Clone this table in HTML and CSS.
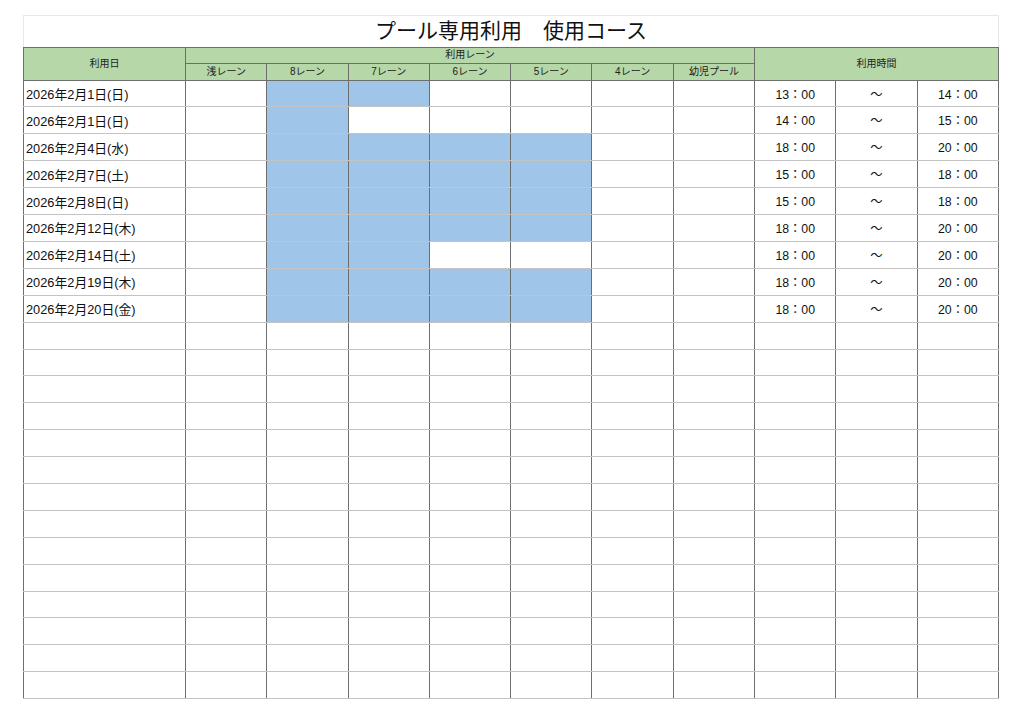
FILE: index.html
```html
<!DOCTYPE html>
<html lang="ja">
<head>
<meta charset="utf-8">
<title>プール専用利用　使用コース</title>
<link rel="stylesheet" href="styles.css">
</head>
<body>
<table class="sheet">
  <colgroup>
    <col class="c-date">
    <col class="c-u"><col class="c-u"><col class="c-u"><col class="c-u"><col class="c-u"><col class="c-u"><col class="c-u">
    <col class="c-u"><col class="c-u"><col class="c-u">
  </colgroup>
  <thead>
    <tr class="title-row"><th colspan="11" class="title">プール専用利用　使用コース</th></tr>
    <tr class="h1">
      <th rowspan="2" class="hd">利用日</th>
      <th colspan="7" class="hd">利用レーン</th>
      <th colspan="3" rowspan="2" class="hd">利用時間</th>
    </tr>
    <tr class="h2">
      <th class="hd">浅レーン</th><th class="hd">8レーン</th><th class="hd">7レーン</th><th class="hd">6レーン</th><th class="hd">5レーン</th><th class="hd">4レーン</th><th class="hd">幼児プール</th>
    </tr>
  </thead>
  <tbody>
    <tr><td class="date">2026年2月1日(日)</td><td></td><td class="b"></td><td class="b"></td><td></td><td></td><td></td><td></td><td class="t">13：00</td><td class="t">～</td><td class="t">14：00</td></tr>
    <tr><td class="date">2026年2月1日(日)</td><td></td><td class="b"></td><td></td><td></td><td></td><td></td><td></td><td class="t">14：00</td><td class="t">～</td><td class="t">15：00</td></tr>
    <tr><td class="date">2026年2月4日(水)</td><td></td><td class="b"></td><td class="b"></td><td class="b"></td><td class="b"></td><td></td><td></td><td class="t">18：00</td><td class="t">～</td><td class="t">20：00</td></tr>
    <tr><td class="date">2026年2月7日(土)</td><td></td><td class="b"></td><td class="b"></td><td class="b"></td><td class="b"></td><td></td><td></td><td class="t">15：00</td><td class="t">～</td><td class="t">18：00</td></tr>
    <tr><td class="date">2026年2月8日(日)</td><td></td><td class="b"></td><td class="b"></td><td class="b"></td><td class="b"></td><td></td><td></td><td class="t">15：00</td><td class="t">～</td><td class="t">18：00</td></tr>
    <tr><td class="date">2026年2月12日(木)</td><td></td><td class="b"></td><td class="b"></td><td class="b"></td><td class="b"></td><td></td><td></td><td class="t">18：00</td><td class="t">～</td><td class="t">20：00</td></tr>
    <tr><td class="date">2026年2月14日(土)</td><td></td><td class="b"></td><td class="b"></td><td></td><td></td><td></td><td></td><td class="t">18：00</td><td class="t">～</td><td class="t">20：00</td></tr>
    <tr><td class="date">2026年2月19日(木)</td><td></td><td class="b"></td><td class="b"></td><td class="b"></td><td class="b"></td><td></td><td></td><td class="t">18：00</td><td class="t">～</td><td class="t">20：00</td></tr>
    <tr><td class="date">2026年2月20日(金)</td><td></td><td class="b"></td><td class="b"></td><td class="b"></td><td class="b"></td><td></td><td></td><td class="t">18：00</td><td class="t">～</td><td class="t">20：00</td></tr>
    <tr><td></td><td></td><td></td><td></td><td></td><td></td><td></td><td></td><td></td><td></td><td></td></tr>
    <tr><td></td><td></td><td></td><td></td><td></td><td></td><td></td><td></td><td></td><td></td><td></td></tr>
    <tr><td></td><td></td><td></td><td></td><td></td><td></td><td></td><td></td><td></td><td></td><td></td></tr>
    <tr><td></td><td></td><td></td><td></td><td></td><td></td><td></td><td></td><td></td><td></td><td></td></tr>
    <tr><td></td><td></td><td></td><td></td><td></td><td></td><td></td><td></td><td></td><td></td><td></td></tr>
    <tr><td></td><td></td><td></td><td></td><td></td><td></td><td></td><td></td><td></td><td></td><td></td></tr>
    <tr><td></td><td></td><td></td><td></td><td></td><td></td><td></td><td></td><td></td><td></td><td></td></tr>
    <tr><td></td><td></td><td></td><td></td><td></td><td></td><td></td><td></td><td></td><td></td><td></td></tr>
    <tr><td></td><td></td><td></td><td></td><td></td><td></td><td></td><td></td><td></td><td></td><td></td></tr>
    <tr><td></td><td></td><td></td><td></td><td></td><td></td><td></td><td></td><td></td><td></td><td></td></tr>
    <tr><td></td><td></td><td></td><td></td><td></td><td></td><td></td><td></td><td></td><td></td><td></td></tr>
    <tr><td></td><td></td><td></td><td></td><td></td><td></td><td></td><td></td><td></td><td></td><td></td></tr>
    <tr><td></td><td></td><td></td><td></td><td></td><td></td><td></td><td></td><td></td><td></td><td></td></tr>
    <tr><td></td><td></td><td></td><td></td><td></td><td></td><td></td><td></td><td></td><td></td><td></td></tr>
  </tbody>
</table>
</body>
</html>
```

FILE: styles.css
```css
html, body {
  margin: 0;
  padding: 0;
  background: #ffffff;
}

body {
  padding: 15px 0 0 23px;
  font-family: "Liberation Sans", "Noto Sans CJK JP", sans-serif;
  color: #111;
}

.sheet {
  border-collapse: collapse;
  table-layout: fixed;
  width: 975px;
}

.c-date { width: 162px; }
.c-u { width: 81.3px; }

.sheet th,
.sheet td {
  padding: 0;
  border-top: none;
  border-left: none;
  border-right: 1px solid #6e6e6e;
  border-bottom: 1px solid #c4c4c4;
  overflow: hidden;
  white-space: nowrap;
}

.sheet tbody td:first-child,
.sheet .h1 th:first-child {
  border-left: 1px solid #6e6e6e;
}

.title-row { height: 31.6px; }

.sheet th.title {
  border: 1px solid #e8e8e8;
  border-bottom: 1px solid #6e6e6e;
  font-weight: normal;
  font-size: 21px;
  line-height: 24px;
  color: #111;
  text-align: center;
  vertical-align: middle;
}

.h1 { height: 16px; }
.h2 { height: 17px; }

.sheet th.hd {
  background: #b6d7a8;
  font-weight: normal;
  font-size: 10px;
  color: #222;
  text-align: center;
  vertical-align: middle;
  border-bottom: 1px solid #6e6e6e;
  border-right: 1px solid #6e6e6e;
  line-height: 12px;
}

.sheet tbody tr {
  height: 26.9px;
}

.sheet td.date {
  font-size: 12.8px;
  padding-left: 2px;
  text-align: left;
  vertical-align: middle;
}

.sheet td.t {
  font-size: 12.3px;
  text-align: center;
  vertical-align: middle;
}

.sheet td.b {
  background: #9fc5e8;
}
```
